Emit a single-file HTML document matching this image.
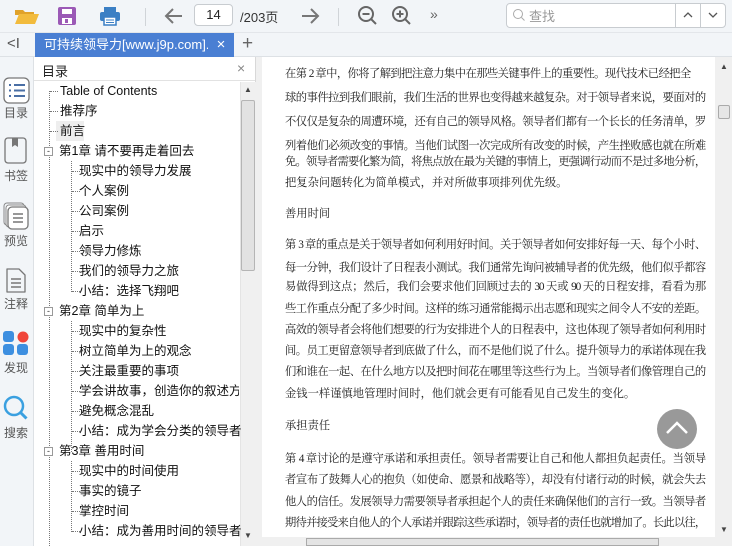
<!DOCTYPE html>
<html><head><meta charset="utf-8"><style>
*{margin:0;padding:0;box-sizing:border-box}
body{width:732px;height:546px;overflow:hidden;background:#fff;font-family:"Liberation Sans","Noto Sans CJK SC",sans-serif;position:relative}
.a{position:absolute}
#tb{left:0;top:0;width:732px;height:33px;background:#f2f5f8;border-bottom:1px solid #e3e6ea}
#tabs{left:0;top:33px;width:732px;height:24px;background:#f2f5f8;border-bottom:1px solid #dde1e5}
#side{left:0;top:57px;width:34px;height:489px;background:#f2f5f8;border-right:1px solid #dde1e5}
.sl{position:absolute;left:0;width:30px;text-align:center;font-size:12px;color:#555}
#toc{left:34px;top:57px;width:222px;height:489px;background:#fff;border-right:1px solid #d8d8d8}
.ti{position:absolute;font-size:12.5px;color:#111;white-space:nowrap;line-height:16px}
.dl{position:absolute;border-top:1px dotted #777;width:8px}
#doc{left:256px;top:57px;width:476px;height:489px;background:#f0f0f0}
#page{left:262px;top:57px;width:453px;height:480px;background:#fff}
.ln{position:absolute;left:285px;width:420px;font-family:"Liberation Serif","Noto Serif CJK SC",serif;font-size:11.3px;color:#222;white-space:nowrap;text-align:justify;text-align-last:justify;line-height:14px;letter-spacing:-1.2px}
.l{text-align-last:left;letter-spacing:0}
</style></head><body>
<div id="tb" class="a">
 <svg class="a" style="left:14px;top:6px" width="26" height="20"><path d="M1 4h8l2 2h9v3H1z" fill="#e0a22a"/><path d="M1 18L5 8h20l-4 10z" fill="#f2bb3d"/></svg>
 <svg class="a" style="left:57px;top:6px" width="20" height="20"><rect x="1" y="1" width="18" height="18" rx="2" fill="#9b59b6"/><rect x="5" y="3" width="10" height="5" fill="#fff"/><rect x="5" y="12" width="10" height="6" fill="#fff"/><rect x="8" y="13" width="3" height="4" fill="#9b59b6"/></svg>
 <svg class="a" style="left:99px;top:6px" width="22" height="20"><rect x="5" y="1" width="12" height="5" fill="#3b7fc4"/><rect x="1" y="6" width="20" height="9" rx="2" fill="#3b7fc4"/><rect x="5" y="11" width="12" height="8" fill="#fff" stroke="#3b7fc4" stroke-width="1.5"/><line x1="7" y1="14" x2="15" y2="14" stroke="#3b7fc4"/><line x1="7" y1="16.5" x2="15" y2="16.5" stroke="#3b7fc4"/></svg>
 <div class="a" style="left:145px;top:8px;width:1px;height:18px;background:#d0d4d8"></div>
 <svg class="a" style="left:164px;top:7px" width="20" height="18"><path d="M18 9H3M9 2L2 9l7 7" stroke="#777" stroke-width="2" fill="none"/></svg>
 <div class="a" style="left:194px;top:4px;width:39px;height:22px;border:1px solid #c8ccd0;border-radius:4px;background:#fff;font-size:13px;text-align:center;line-height:20px;color:#222">14</div>
 <div class="a" style="left:240px;top:7px;font-size:13px;color:#333">/203页</div>
 <svg class="a" style="left:300px;top:7px" width="20" height="18"><path d="M2 9h15M11 2l7 7-7 7" stroke="#777" stroke-width="2" fill="none"/></svg>
 <div class="a" style="left:338px;top:8px;width:1px;height:18px;background:#d0d4d8"></div>
 <svg class="a" style="left:357px;top:5px" width="22" height="22"><circle cx="9" cy="9" r="7" stroke="#666" stroke-width="2" fill="none"/><path d="M5.5 9h7M14 14l5 5" stroke="#666" stroke-width="2"/></svg>
 <svg class="a" style="left:391px;top:5px" width="22" height="22"><circle cx="9" cy="9" r="7" stroke="#666" stroke-width="2" fill="none"/><path d="M5.5 9h7M9 5.5v7M14 14l5 5" stroke="#666" stroke-width="2"/></svg>
 <div class="a" style="left:430px;top:6px;font-size:14px;color:#666">»</div>
 <div class="a" style="left:506px;top:3px;width:220px;height:25px;border:1px solid #c8ccd0;border-radius:4px;background:#fff"></div>
 <svg class="a" style="left:512px;top:8px" width="14" height="14"><circle cx="6" cy="6" r="4.5" stroke="#aaa" fill="none"/><path d="M9.5 9.5l3 3" stroke="#aaa"/></svg>
 <div class="a" style="left:529px;top:6px;font-size:13px;color:#999">查找</div>
 <div class="a" style="left:675px;top:4px;width:1px;height:23px;background:#c8ccd0"></div>
 <div class="a" style="left:700px;top:4px;width:1px;height:23px;background:#c8ccd0"></div>
 <svg class="a" style="left:683px;top:11px" width="10" height="8"><path d="M1 6l4-4 4 4" stroke="#555" fill="none" stroke-width="1.3"/></svg>
 <svg class="a" style="left:708px;top:11px" width="10" height="8"><path d="M1 2l4 4 4-4" stroke="#555" fill="none" stroke-width="1.3"/></svg>
</div>
<div id="tabs" class="a">
 <div class="a" style="left:7px;top:2px;font-size:15px;color:#555">&lt;I</div>
 <div class="a" style="left:35px;top:0;width:199px;height:24px;background:#4a7fd3;color:#fff;font-size:13px;line-height:24px;padding-left:9px;overflow:hidden;white-space:nowrap">可持续领导力[www.j9p.com].pdf</div>
 <div class="a" style="left:208px;top:0;width:26px;height:24px;background:#4a7fd3;color:#fff;font-size:15px;line-height:24px;text-align:center">×</div>
 <div class="a" style="left:242px;top:0;font-size:19px;color:#666;line-height:22px">+</div>
</div>
<div id="side" class="a">
 <svg class="a" style="left:3px;top:20px" width="28" height="28"><rect x="1" y="1" width="25" height="25" rx="5" fill="#fff" stroke="#777" stroke-width="1.3"/><path d="M6 8h2M11 8h11M6 13.5h2M11 13.5h11M6 19h2M11 19h11" stroke="#4a6fa5" stroke-width="2"/></svg>
 <div class="a" style="left:30px;top:30px;width:0;height:0;border:5px solid transparent;border-right-color:#fff"></div>
 <div class="sl" style="top:47px;left:1px">目录</div>
 <svg class="a" style="left:4px;top:80px" width="24" height="28"><rect x="1" y="1" width="21" height="25" rx="3" fill="none" stroke="#777" stroke-width="1.3"/><path d="M8 1v9l3-2 3 2V1" fill="#777"/></svg>
 <div class="sl" style="top:110px;left:1px">书签</div>
 <svg class="a" style="left:3px;top:145px" width="26" height="28"><rect x="1" y="1" width="20" height="22" rx="3" fill="none" stroke="#888"/><rect x="3" y="3" width="20" height="22" rx="3" fill="#fff" stroke="#888"/><rect x="5" y="5" width="20" height="22" rx="4" fill="#fff" stroke="#777" stroke-width="1.3"/><path d="M10 12h10M10 16h10M10 20h10" stroke="#777" stroke-width="1.5"/></svg>
 <div class="sl" style="top:175px;left:1px">预览</div>
 <svg class="a" style="left:5px;top:210px" width="22" height="28"><path d="M2 2h12l6 6v17H2z" fill="none" stroke="#777" stroke-width="1.3" stroke-linejoin="round"/><path d="M6 12h10M6 16h10M6 20h10" stroke="#777" stroke-width="1.5"/></svg>
 <div class="sl" style="top:238px;left:1px">注释</div>
 <svg class="a" style="left:3px;top:274px" width="26" height="26"><rect x="0" y="0" width="11" height="11" rx="3" fill="#3d8fe0"/><circle cx="20" cy="6" r="5.5" fill="#f0453a"/><rect x="0" y="13" width="11" height="11" rx="3" fill="#3d8fe0"/><rect x="14" y="13" width="11" height="11" rx="3" fill="#3d8fe0"/></svg>
 <div class="sl" style="top:302px;left:1px">发现</div>
 <svg class="a" style="left:3px;top:338px" width="26" height="28"><circle cx="11" cy="11" r="9" stroke="#3aa0e0" stroke-width="2.5" fill="none"/><path d="M17.5 17.5l6 6" stroke="#3aa0e0" stroke-width="3"/></svg>
 <div class="sl" style="top:367px;left:1px">搜索</div>
</div>
<div id="toc" class="a">
 <div class="a" style="left:0;top:0;width:221px;height:24px;border-bottom:1px solid #e2e2e2;background:#fff"></div>
 <div class="a" style="left:8px;top:4px;font-size:13px;color:#222">目录</div>
 <div class="a" style="left:203px;top:3px;font-size:14px;color:#888">×</div>
 <div class="a" style="left:206px;top:25px;width:16px;height:464px;background:#f0f0f0;border-left:1px solid #e4e4e4"></div>
 <div class="a" style="left:210px;top:28px;font-size:8px;color:#444">▲</div>
 <div class="a" style="left:207px;top:43px;width:14px;height:171px;background:#e2e2e2;border:1px solid #b5b5b5;border-radius:2px"></div>
 <div class="a" style="left:210px;top:474px;font-size:8px;color:#444">▼</div>
 <div class="a" style="left:15px;top:34px;height:455px;border-left:1px dotted #777"></div>
 <div class="a" style="left:37px;top:104px;height:131px;border-left:1px dotted #777"></div>
 <div class="a" style="left:37px;top:264px;height:131px;border-left:1px dotted #777"></div>
 <div class="a" style="left:37px;top:404px;height:71px;border-left:1px dotted #777"></div>
</div>
<div id="doc" class="a"></div>
<div id="page" class="a"></div>
<div class="a" style="left:715px;top:57px;width:17px;height:480px;background:#f0f0f0"></div>
<div class="a" style="left:720px;top:62px;font-size:8px;color:#444">▲</div>
<div class="a" style="left:718px;top:105px;width:12px;height:14px;background:#e6e6e6;border:1px solid #aaa;border-radius:2px"></div>
<div class="a" style="left:720px;top:525px;font-size:8px;color:#444">▼</div>
<div class="a" style="left:256px;top:537px;width:476px;height:9px;background:#f0f0f0"></div>
<div class="a" style="left:306px;top:538px;width:353px;height:8px;background:#e4e4e4;border:1px solid #aaa"></div>
<div class="a" style="left:657px;top:409px;width:40px;height:40px;border-radius:50%;background:#999"></div>
<svg class="a" style="left:664px;top:418px" width="26" height="20"><path d="M3 15l10-10 10 10" stroke="#fff" stroke-width="2.5" fill="none"/></svg>

<div class="ln" style="top:67px;width:405px">在第 2 章中，你将了解到把注意力集中在那些关键事件上的重要性。现代技术已经把全</div>
<div class="ln" style="top:91px">球的事件拉到我们眼前，我们生活的世界也变得越来越复杂。对于领导者来说，要面对的</div>
<div class="ln" style="top:115px">不仅仅是复杂的周遭环境，还有自己的领导风格。领导者们都有一个长长的任务清单，罗</div>
<div class="ln" style="top:139px">列着他们必须改变的事情。当他们试图一次完成所有改变的时候，产生挫败感也就在所难</div>
<div class="ln" style="top:155px">免。领导者需要化繁为简，将焦点放在最为关键的事情上，更强调行动而不是过多地分析，</div>
<div class="ln l" style="top:176px">把复杂问题转化为简单模式，并对所做事项排列优先级。</div>
<div class="ln l" style="top:207px">善用时间</div>
<div class="ln" style="top:238px">第 3 章的重点是关于领导者如何利用好时间。关于领导者如何安排好每一天、每个小时、</div>
<div class="ln" style="top:261px">每一分钟，我们设计了日程表小测试。我们通常先询问被辅导者的优先级，他们似乎都容</div>
<div class="ln" style="top:280px">易做得到这点；然后，我们会要求他们回顾过去的 30 天或 90 天的日程安排，看看为那</div>
<div class="ln" style="top:302px">些工作重点分配了多少时间。这样的练习通常能揭示出志愿和现实之间令人不安的差距。</div>
<div class="ln" style="top:323px">高效的领导者会将他们想要的行为安排进个人的日程表中，这也体现了领导者如何利用时</div>
<div class="ln" style="top:344px">间。员工更留意领导者到底做了什么，而不是他们说了什么。提升领导力的承诺体现在我</div>
<div class="ln" style="top:365px">们和谁在一起、在什么地方以及把时间花在哪里等这些行为上。当领导者们像管理自己的</div>
<div class="ln l" style="top:387px">金钱一样谨慎地管理时间时，他们就会更有可能看见自己发生的变化。</div>
<div class="ln l" style="top:419px">承担责任</div>
<div class="ln" style="top:452px">第 4 章讨论的是遵守承诺和承担责任。领导者需要让自己和他人都担负起责任。当领导</div>
<div class="ln" style="top:473px">者宣布了鼓舞人心的抱负（如使命、愿景和战略等），却没有付诸行动的时候，就会失去</div>
<div class="ln" style="top:495px">他人的信任。发展领导力需要领导者承担起个人的责任来确保他们的言行一致。当领导者</div>
<div class="ln" style="top:516px">期待并接受来自他人的个人承诺并跟踪这些承诺时，领导者的责任也就增加了。长此以往，</div>

<div class="ti" style="left:60px;top:83px">Table of Contents</div>
<div class="ti" style="left:60px;top:103px">推荐序</div>
<div class="a" style="left:56px;top:121px;width:28px;height:20px;background:#eee"></div>
<div class="ti" style="left:60px;top:123px">前言</div>
<div class="dl" style="left:50px;top:91px"></div><div class="dl" style="left:50px;top:111px"></div><div class="dl" style="left:50px;top:131px"></div>
<div class="a" style="left:44px;top:147px;width:9px;height:9px;border:1px solid #999;background:#fff;font-size:9px;line-height:6px;text-align:center;color:#333">-</div>
<div class="ti" style="left:59px;top:143px">第1章 请不要再走着回去</div>
<div class="ti" style="left:79px;top:163px">现实中的领导力发展</div>
<div class="ti" style="left:79px;top:183px">个人案例</div>
<div class="ti" style="left:79px;top:203px">公司案例</div>
<div class="ti" style="left:79px;top:223px">启示</div>
<div class="ti" style="left:79px;top:243px">领导力修炼</div>
<div class="ti" style="left:79px;top:263px">我们的领导力之旅</div>
<div class="ti" style="left:79px;top:283px">小结：选择飞翔吧</div>
<div class="a" style="left:44px;top:307px;width:9px;height:9px;border:1px solid #999;background:#fff;font-size:9px;line-height:6px;text-align:center;color:#333">-</div>
<div class="ti" style="left:59px;top:303px">第2章 简单为上</div>
<div class="ti" style="left:79px;top:323px">现实中的复杂性</div>
<div class="ti" style="left:79px;top:343px">树立简单为上的观念</div>
<div class="ti" style="left:79px;top:363px">关注最重要的事项</div>
<div class="ti" style="left:79px;top:383px;width:160px;overflow:hidden">学会讲故事，创造你的叙述方式</div>
<div class="ti" style="left:79px;top:403px">避免概念混乱</div>
<div class="ti" style="left:79px;top:423px">小结：成为学会分类的领导者</div>
<div class="a" style="left:44px;top:447px;width:9px;height:9px;border:1px solid #999;background:#fff;font-size:9px;line-height:6px;text-align:center;color:#333">-</div>
<div class="ti" style="left:59px;top:443px">第3章 善用时间</div>
<div class="ti" style="left:79px;top:463px">现实中的时间使用</div>
<div class="ti" style="left:79px;top:483px">事实的镜子</div>
<div class="ti" style="left:79px;top:503px">掌控时间</div>
<div class="ti" style="left:79px;top:523px">小结：成为善用时间的领导者</div>
<div class="dl" style="left:72px;top:171px"></div><div class="dl" style="left:72px;top:191px"></div><div class="dl" style="left:72px;top:211px"></div><div class="dl" style="left:72px;top:231px"></div><div class="dl" style="left:72px;top:251px"></div><div class="dl" style="left:72px;top:271px"></div><div class="dl" style="left:72px;top:291px"></div>
<div class="dl" style="left:72px;top:331px"></div><div class="dl" style="left:72px;top:351px"></div><div class="dl" style="left:72px;top:371px"></div><div class="dl" style="left:72px;top:391px"></div><div class="dl" style="left:72px;top:411px"></div><div class="dl" style="left:72px;top:431px"></div>
<div class="dl" style="left:72px;top:471px"></div><div class="dl" style="left:72px;top:491px"></div><div class="dl" style="left:72px;top:511px"></div><div class="dl" style="left:72px;top:531px"></div>
</body></html>
